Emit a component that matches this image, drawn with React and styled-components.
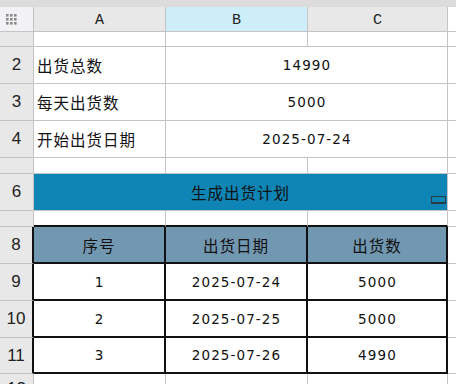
import React from "react";
import styled, { createGlobalStyle } from "styled-components";

const Global = createGlobalStyle`
  html, body { margin: 0; padding: 0; background: #fff; overflow: hidden; }
  * { box-sizing: border-box; }
`;

const Sheet = styled.div`
  width: 456px;
  height: 384px;
  overflow: hidden;
  background: #fff;
  position: relative;
`;

const TopStrip = styled.div`
  height: 7px;
  background: #dcdcdc;
`;

const Grid = styled.div`
  display: grid;
  grid-template-columns: 34px 132px 142px 140px 8px;
  grid-template-rows: 25px 15px 37px 37px 37px 16px 37px 16px 37px 37px 37px 36px 30px;
`;

const Cell = styled.div`
  grid-column: ${(p) => p.$span || "auto"};
  border-right: ${(p) => p.$br || "1px solid #c4c4c4"};
  border-bottom: ${(p) => p.$bb || "1px solid #c4c4c4"};
  background: ${(p) => p.$bg || "#fff"};
  display: flex;
  align-items: center;
  justify-content: ${(p) => (p.$left ? "flex-start" : "center")};
  padding-left: ${(p) => (p.$left ? "3px" : "0")};
  font-family: "Noto Sans CJK SC", sans-serif;
  font-size: 15.5px;
  letter-spacing: 1px;
  color: #111;
  white-space: nowrap;
  position: relative;
`;

const Num = styled.span`
  font-family: "DejaVu Sans", sans-serif;
  font-size: 13.5px;
  letter-spacing: 1.1px;
  color: #111;
  padding-left: 1px;
`;

const RowHead = styled(Cell)`
  background: #e8e8e8;
  justify-content: center;
  font-family: "Liberation Sans", sans-serif;
  font-size: 17px;
  letter-spacing: 0;
  color: #222;
  font-weight: 300;
`;

const ColHead = styled(Cell)`
  background: ${(p) => (p.$active ? "#ceedfa" : "#e8e8e8")};
  font-family: "Liberation Mono", monospace;
  font-size: 15px;
  letter-spacing: 0;
  color: #222;
  padding-top: 2px;
`;

const Corner = styled(Cell)`
  background: #f2f2f4;
  justify-content: flex-start;
  padding-left: 6px;
  padding-top: 1px;
`;

const Filler = styled.div`
  border-bottom: ${(p) => p.$bb || "1px solid #c4c4c4"};
  background: #fff;
`;

const ResizeMark = styled.div`
  position: absolute;
  right: 1px;
  bottom: 6px;
  width: 15px;
  height: 8px;
  border: 1px solid #2b3a44;
  border-bottom-width: 2px;
`;

const GripIcon = () => (
  <svg width="11" height="11" viewBox="0 0 11 11">
    {[0, 4, 8].map((y) =>
      [0, 4, 8].map((x) => (
        <rect key={`${x}-${y}`} x={x} y={y} width="2.6" height="2.6" fill="#8a8a8a" />
      ))
    )}
  </svg>
);

const BLACK = "2px solid #111";

export default function App() {
  const plan = [
    ["1", "2025-07-24", "5000"],
    ["2", "2025-07-25", "5000"],
    ["3", "2025-07-26", "4990"],
  ];
  return (
    <Sheet>
      <Global />
      <TopStrip />
      <Grid>
        <Corner>
          <GripIcon />
        </Corner>
        <ColHead>A</ColHead>
        <ColHead $active>B</ColHead>
        <ColHead>C</ColHead>
        <Filler $bb="1px solid #c4c4c4" />

        <RowHead />
        <Cell />
        <Cell />
        <Cell />
        <Filler />

        <RowHead>2</RowHead>
        <Cell $left>出货总数</Cell>
        <Cell $span="span 2">
          <Num>14990</Num>
        </Cell>
        <Filler />

        <RowHead>3</RowHead>
        <Cell $left>每天出货数</Cell>
        <Cell $span="span 2">
          <Num>5000</Num>
        </Cell>
        <Filler />

        <RowHead>4</RowHead>
        <Cell $left>开始出货日期</Cell>
        <Cell $span="span 2">
          <Num>2025-07-24</Num>
        </Cell>
        <Filler />

        <RowHead />
        <Cell />
        <Cell />
        <Cell />
        <Filler />

        <RowHead>6</RowHead>
        <Cell $span="span 3" $bg="#0e85b5" $bb="1px solid #c4c4c4">
          生成出货计划
          <ResizeMark />
        </Cell>
        <Filler />

        <RowHead />
        <Cell $bb={BLACK} />
        <Cell $bb={BLACK} />
        <Cell $bb={BLACK} />
        <Filler />

        <RowHead $br={BLACK}>8</RowHead>
        <Cell $bg="#7297b1" $br={BLACK} $bb={BLACK}>序号</Cell>
        <Cell $bg="#7297b1" $br={BLACK} $bb={BLACK}>出货日期</Cell>
        <Cell $bg="#7297b1" $br={BLACK} $bb={BLACK}>出货数</Cell>
        <Filler />

        {plan.map((r, i) => (
          <React.Fragment key={r[0]}>
            <RowHead $br={BLACK}>{9 + i}</RowHead>
            <Cell $br={BLACK} $bb={BLACK}>
              <Num>{r[0]}</Num>
            </Cell>
            <Cell $br={BLACK} $bb={BLACK}>
              <Num>{r[1]}</Num>
            </Cell>
            <Cell $br={BLACK} $bb={BLACK}>
              <Num>{r[2]}</Num>
            </Cell>
            <Filler />
          </React.Fragment>
        ))}

        <RowHead>12</RowHead>
        <Cell />
        <Cell />
        <Cell />
        <Filler />
      </Grid>
    </Sheet>
  );
}
